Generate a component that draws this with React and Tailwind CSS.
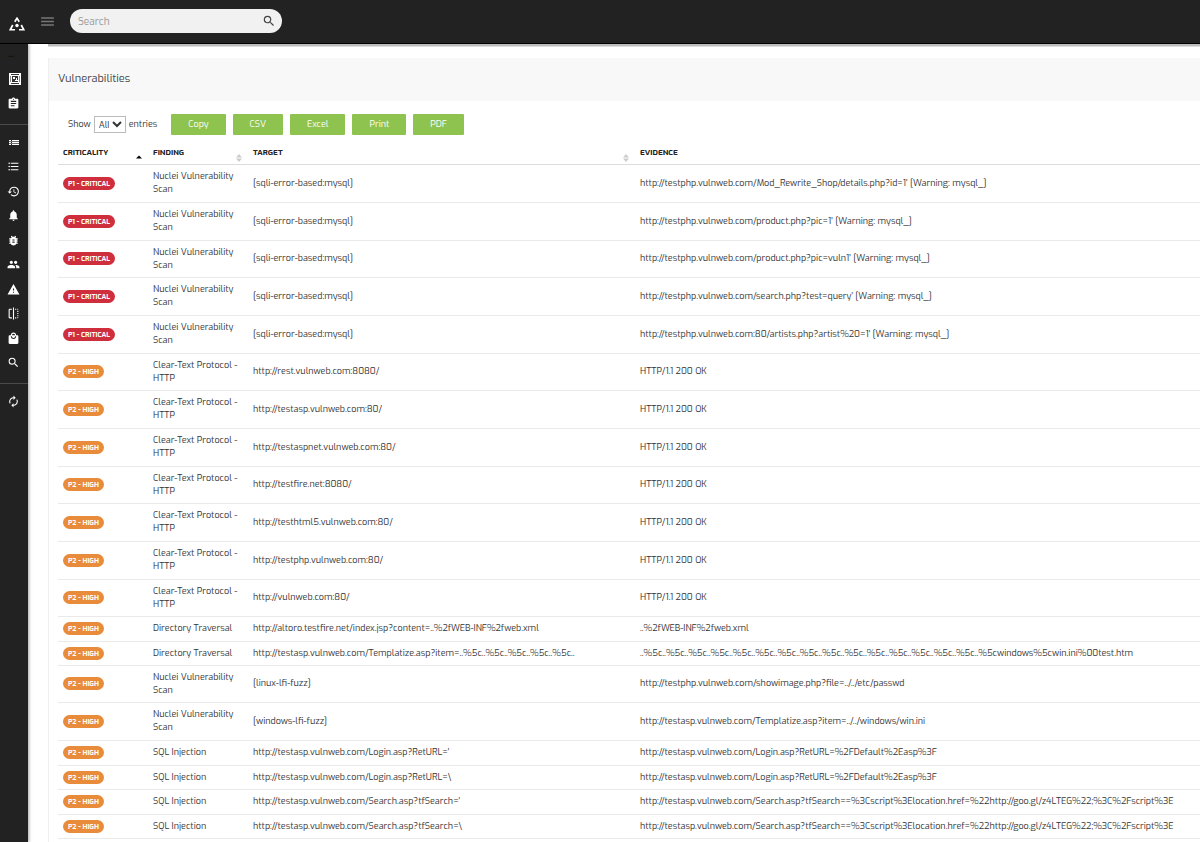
import {
  MdAssignment,
  MdAutorenew,
  MdBugReport,
  MdFlip,
  MdFormatListBulleted,
  MdHistory,
  MdLocalMall,
  MdMenu,
  MdNotifications,
  MdPeople,
  MdSearch,
  MdWarning,
} from 'react-icons/md';

const php = 'http://testphp.vulnweb.com';
const asp = 'http://testasp.vulnweb.com';
const nuclei = 'Nuclei Vulnerability Scan';
const clear = 'Clear-Text Protocol - HTTP';
const ok = 'HTTP/1.1 200 OK';
const script =
  '/Search.asp?tfSearch==%3Cscript%3Elocation.href=%22http://goo.gl/z4LTEG%22;%3C%2Fscript%3E';

const rows = [
  [1, nuclei, '[sqli-error-based:mysql]', php + "/Mod_Rewrite_Shop/details.php?id=1' [Warning: mysql_]"],
  [1, nuclei, '[sqli-error-based:mysql]', php + "/product.php?pic=1' [Warning: mysql_]"],
  [1, nuclei, '[sqli-error-based:mysql]', php + "/product.php?pic=vuln1' [Warning: mysql_]"],
  [1, nuclei, '[sqli-error-based:mysql]', php + "/search.php?test=query' [Warning: mysql_]"],
  [1, nuclei, '[sqli-error-based:mysql]', php + ":80/artists.php?artist%20=1' [Warning: mysql_]"],
  [2, clear, 'http://rest.vulnweb.com:8080/', ok],
  [2, clear, 'http://testasp.vulnweb.com:80/', ok],
  [2, clear, 'http://testaspnet.vulnweb.com:80/', ok],
  [2, clear, 'http://testfire.net:8080/', ok],
  [2, clear, 'http://testhtml5.vulnweb.com:80/', ok],
  [2, clear, 'http://testphp.vulnweb.com:80/', ok],
  [2, clear, 'http://vulnweb.com:80/', ok],
  [2, 'Directory Traversal', 'http://altoro.testfire.net/index.jsp?content=..%2fWEB-INF%2fweb.xml', '..%2fWEB-INF%2fweb.xml'],
  [2, 'Directory Traversal', asp + '/Templatize.asp?item=..%5c..%5c..%5c..%5c..%5c..', '..%5c'.repeat(16) + 'windows%5cwin.ini%00test.htm'],
  [2, nuclei, '[linux-lfi-fuzz]', php + '/showimage.php?file=../../etc/passwd'],
  [2, nuclei, '[windows-lfi-fuzz]', asp + '/Templatize.asp?item=../../windows/win.ini'],
  [2, 'SQL Injection', asp + "/Login.asp?RetURL='", asp + '/Login.asp?RetURL=%2FDefault%2Easp%3F'],
  [2, 'SQL Injection', asp + '/Login.asp?RetURL=\\', asp + '/Login.asp?RetURL=%2FDefault%2Easp%3F'],
  [2, 'SQL Injection', asp + "/Search.asp?tfSearch='", asp + script],
  [2, 'SQL Injection', asp + '/Search.asp?tfSearch=\\', asp + script],
];

function Logo() {
  return (
    <svg viewBox="0 0 32 28" className="h-[14px] w-4" fill="none" stroke="#fff" strokeWidth="3.4" aria-hidden="true">
      <path d="M11.5 9.5 16 2.5l4.500 7M7.500 16 2.500 25.500H12M24.500 16l5 9.500H20" />
      <circle cx="16" cy="17" r="3.400" fill="#fff" stroke="none" />
    </svg>
  );
}

function WorkspaceIcon() {
  return (
    <svg viewBox="0 0 12 12" className="size-3" aria-hidden="true">
      <path fill="#fff" d="M0 0h12v12H0z" />
      <path fill="#333" d="M2 1h8v1H2zM2 10h8v1H2zM3 3h6v6H3z" />
      <path fill="#888" d="M1 3h1v6H1zM10 3h1v6h-1z" />
      <path fill="#fff" d="M4 4h2v2H4zM7 5h1v2h1v1H6V7h1z" />
    </svg>
  );
}

function ListIcon({ className }) {
  return (
    <svg viewBox="0 0 13 13" className={className} fill="currentColor" aria-hidden="true">
      <path d="M2 4h2v1H2zM5 4h7v1H5zM2 6h2v1H2zM5 6h7v1H5zM2 8h2v1H2zM5 8h7v1H5z" />
      <path opacity=".35" d="M2 5h10v1H2zM2 7h10v1H2z" />
    </svg>
  );
}

function NavLink({ icon: Icon, label }) {
  return (
    <a href="#" aria-label={label} className="flex items-center pl-[7px] text-white">
      <Icon className="size-[13px]" />
    </a>
  );
}

function SortIcon({ active }) {
  return (
    <svg viewBox="0 0 6 8" className="h-2 w-[6px] shrink-0" aria-hidden="true">
      {active ? (
        <path d="M0 4.500 3 1.500l3 3z" fill="#000" />
      ) : (
        <path d="M0 3.500 3 0l3 3.500zM0 4.500h6L3 8z" fill="#ccc" />
      )}
    </svg>
  );
}

function Heading({ label, width, sort }) {
  return (
    <th scope="col" className={`${width} pt-[2px] pr-[6px] pb-0 pl-[5px] text-left text-[8px] font-bold text-[#222]`}>
      <span className="flex items-center justify-between">
        {label}
        {sort && (
          <span className="pt-[10px]">
            <SortIcon active={sort === 'asc'} />
          </span>
        )}
      </span>
    </th>
  );
}

function Badge({ level }) {
  return (
    <span
      className={`inline-flex h-[13px] items-center rounded-full px-[5px] text-[7px] font-bold whitespace-nowrap text-white ${
        level === 1 ? 'bg-[#cf2e3c]' : 'bg-[#e88c3c]'
      }`}
    >
      {level === 1 ? 'P1 - CRITICAL' : 'P2 - HIGH'}
    </span>
  );
}

export default function App() {
  return (
    <div className="flex min-h-screen flex-col bg-white font-[Exo,Roboto,sans-serif] text-[#333]">
      <header className="flex h-11 items-center border-b border-black bg-[#222]">
        <a href="#" aria-label="Home" className="mt-1 ml-[9px] flex">
          <Logo />
        </a>
        <button type="button" aria-label="Toggle menu" className="ml-[14px] text-[#777]">
          <MdMenu className="size-[17px]" />
        </button>
        <form className="mb-px ml-[14px] flex h-6 w-[212px] items-center rounded-full bg-[#f1f1f1] pr-[6px] pl-2">
          <input
            type="text"
            aria-label="Search"
            placeholder="Search"
            className="min-w-0 flex-1 bg-transparent text-[10px] outline-none placeholder:text-[#999]"
          />
          <button type="button" aria-label="Submit search" className="text-[#444]">
            <MdSearch className="size-[14px]" />
          </button>
        </form>
      </header>

      <div className="flex flex-1">
        <nav aria-label="Main" className="z-10 flex w-7 shrink-0 flex-col bg-[#222] shadow-[1px_0_3px_rgba(0,0,0,0.35)]">
          <span className="h-[23px] pl-2 text-[10px] leading-5 text-black">...</span>
          <a href="#" aria-label="Workspaces" className="flex h-6 items-center pl-[9px]">
            <WorkspaceIcon />
          </a>
          <a href="#" aria-label="Reports" className="flex h-[25px] items-center pl-[7px] text-white">
            <MdAssignment className="size-[13px]" />
          </a>
          <div className="mt-2 grid h-[260px] auto-rows-fr border-y border-[#4a4a4a] pt-[5px] pb-2">
            <NavLink icon={ListIcon} label="Overview" />
            <NavLink icon={MdFormatListBulleted} label="Tasks" />
            <NavLink icon={MdHistory} label="History" />
            <NavLink icon={MdNotifications} label="Notifications" />
            <NavLink icon={MdBugReport} label="Bugs" />
            <NavLink icon={MdPeople} label="Users" />
            <NavLink icon={MdWarning} label="Warnings" />
            <NavLink icon={MdFlip} label="Compare" />
            <NavLink icon={MdLocalMall} label="Store" />
            <NavLink icon={MdSearch} label="Find" />
          </div>
          <a href="#" aria-label="Refresh" className="mt-[5px] flex h-6 items-center pl-[7px] text-white">
            <MdAutorenew className="size-[13px]" />
          </a>
        </nav>

        <main className="flex min-w-0 flex-1 flex-col overflow-hidden pl-5">
          <div className="h-[3px] border-b border-[#ddd] bg-[#bbb]" />
          <section className="mt-[11px] flex-1 border-l border-[#eee]">
            <h2 className="flex h-[43px] items-center bg-[#f8f8f8] pl-[9px] text-[11px] text-[#444]">
              Vulnerabilities
            </h2>

            <div className="flex items-center pt-[13px] pl-[19px] text-[9px]">
              <label className="flex items-center gap-[3px]">
                Show
                <select className="h-[17px] w-8 rounded-none border border-[#bbb] bg-white text-[9px] text-[#333]">
                  <option>All</option>
                </select>
                entries
              </label>
              <div className="ml-[14px] flex gap-[7px]">
                {['Copy', 'CSV', 'Excel', 'Print', 'PDF'].map((name) => (
                  <button
                    key={name}
                    type="button"
                    className="h-[21px] rounded-[1px] bg-[#8fc350] px-[17px] text-[9px] text-white"
                  >
                    {name}
                  </button>
                ))}
              </div>
            </div>

            <table className="mt-[5px] ml-[9px] w-full min-w-[1160px] table-fixed border-collapse text-[9px] leading-[13px]">
              <thead>
                <tr className="h-6 border-b border-[#ddd]">
                  <Heading label="CRITICALITY" width="w-[90px]" sort="asc" />
                  <Heading label="FINDING" width="w-[100px]" sort="none" />
                  <Heading label="TARGET" width="w-[387px]" sort="none" />
                  <Heading label="EVIDENCE" width="w-auto" />
                </tr>
              </thead>
              <tbody>
                {rows.map(([level, finding, target, evidence], i) => (
                  <tr
                    key={i}
                    className={`border-b border-[#e9e9e9] ${
                      finding === nuclei || finding === clear ? 'h-[38px] nth-[3n]:h-[37px]' : 'h-[25px] even:h-[24px]'
                    }`}
                  >
                    <td className="px-[5px] py-0">
                      <div className="flex">
                        <Badge level={level} />
                      </div>
                    </td>
                    <td className="py-0 pr-1 pl-[5px]">{finding}</td>
                    <td className="px-[5px] py-0 whitespace-nowrap">{target}</td>
                    <td className="px-[5px] py-0 whitespace-nowrap">{evidence}</td>
                  </tr>
                ))}
              </tbody>
            </table>
          </section>
        </main>
      </div>
    </div>
  );
}
